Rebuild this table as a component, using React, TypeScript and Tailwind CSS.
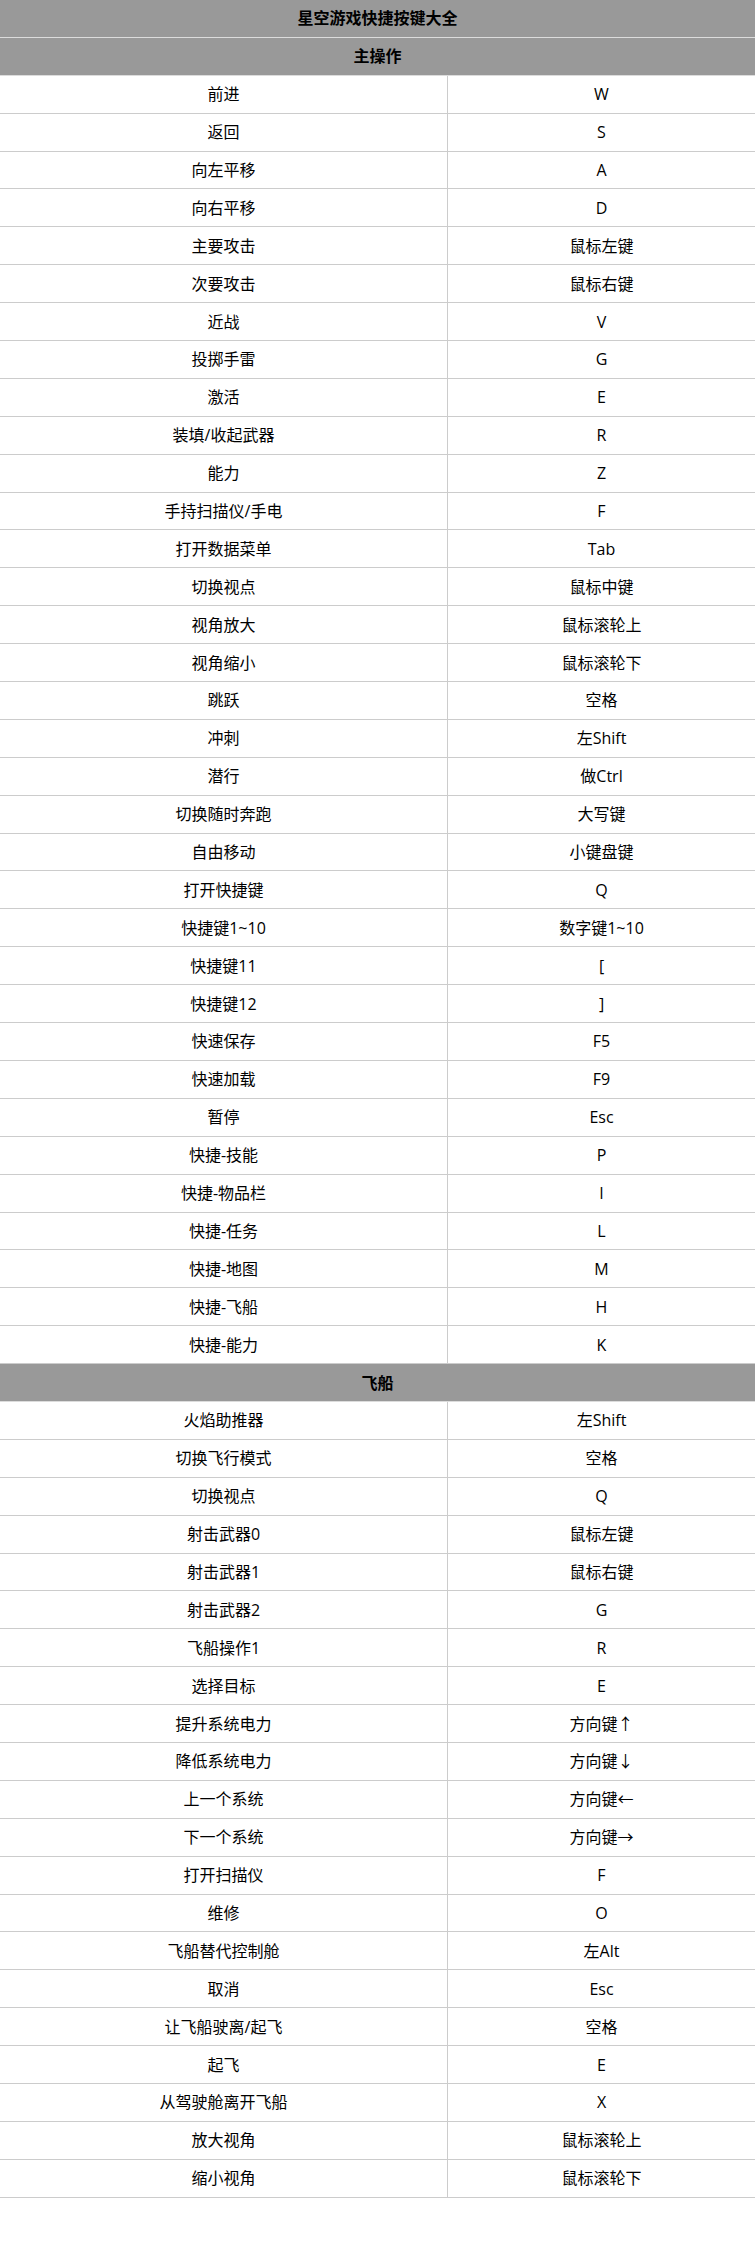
const mainOps: [string, string][] = [
  ["前进", "W"],
  ["返回", "S"],
  ["向左平移", "A"],
  ["向右平移", "D"],
  ["主要攻击", "鼠标左键"],
  ["次要攻击", "鼠标右键"],
  ["近战", "V"],
  ["投掷手雷", "G"],
  ["激活", "E"],
  ["装填/收起武器", "R"],
  ["能力", "Z"],
  ["手持扫描仪/手电", "F"],
  ["打开数据菜单", "Tab"],
  ["切换视点", "鼠标中键"],
  ["视角放大", "鼠标滚轮上"],
  ["视角缩小", "鼠标滚轮下"],
  ["跳跃", "空格"],
  ["冲刺", "左Shift"],
  ["潜行", "做Ctrl"],
  ["切换随时奔跑", "大写键"],
  ["自由移动", "小键盘键"],
  ["打开快捷键", "Q"],
  ["快捷键1~10", "数字键1~10"],
  ["快捷键11", "["],
  ["快捷键12", "]"],
  ["快速保存", "F5"],
  ["快速加载", "F9"],
  ["暂停", "Esc"],
  ["快捷-技能", "P"],
  ["快捷-物品栏", "I"],
  ["快捷-任务", "L"],
  ["快捷-地图", "M"],
  ["快捷-飞船", "H"],
  ["快捷-能力", "K"],
];

const shipOps: [string, string][] = [
  ["火焰助推器", "左Shift"],
  ["切换飞行模式", "空格"],
  ["切换视点", "Q"],
  ["射击武器0", "鼠标左键"],
  ["射击武器1", "鼠标右键"],
  ["射击武器2", "G"],
  ["飞船操作1", "R"],
  ["选择目标", "E"],
  ["提升系统电力", "方向键↑"],
  ["降低系统电力", "方向键↓"],
  ["上一个系统", "方向键←"],
  ["下一个系统", "方向键→"],
  ["打开扫描仪", "F"],
  ["维修", "O"],
  ["飞船替代控制舱", "左Alt"],
  ["取消", "Esc"],
  ["让飞船驶离/起飞", "空格"],
  ["起飞", "E"],
  ["从驾驶舱离开飞船", "X"],
  ["放大视角", "鼠标滚轮上"],
  ["缩小视角", "鼠标滚轮下"],
];

function HeadRow({ children }: { children: string }) {
  return (
    <div className="flex h-[37.9px] items-center justify-center border-b border-[#dcdcdc] bg-[#999999] font-bold">
      {children}
    </div>
  );
}

function Row({ action, keyName }: { action: string; keyName: string }) {
  return (
    <div className="flex h-[37.9px] border-b border-[#cccccc]">
      <div className="flex w-[448px] items-center justify-center border-r border-[#cccccc]">
        {action}
      </div>
      <div className="flex flex-1 items-center justify-center">{keyName}</div>
    </div>
  );
}

export default function App() {
  return (
    <div className="min-h-[2246px] w-[755px] overflow-hidden bg-white font-['Open_Sans','Noto_Sans_CJK_SC',sans-serif] text-[16px] leading-none text-black">
      <HeadRow>星空游戏快捷按键大全</HeadRow>
      <HeadRow>主操作</HeadRow>
      {mainOps.map(([a, k], i) => (
        <Row key={"m" + i} action={a} keyName={k} />
      ))}
      <HeadRow>飞船</HeadRow>
      {shipOps.map(([a, k], i) => (
        <Row key={"s" + i} action={a} keyName={k} />
      ))}
      <p className="mt-[44px] pl-[72px] leading-[24px]">
        以上就是星空游戏快捷按键大全的全部内容了，希望对大家有所帮助。
      </p>
    </div>
  );
}
